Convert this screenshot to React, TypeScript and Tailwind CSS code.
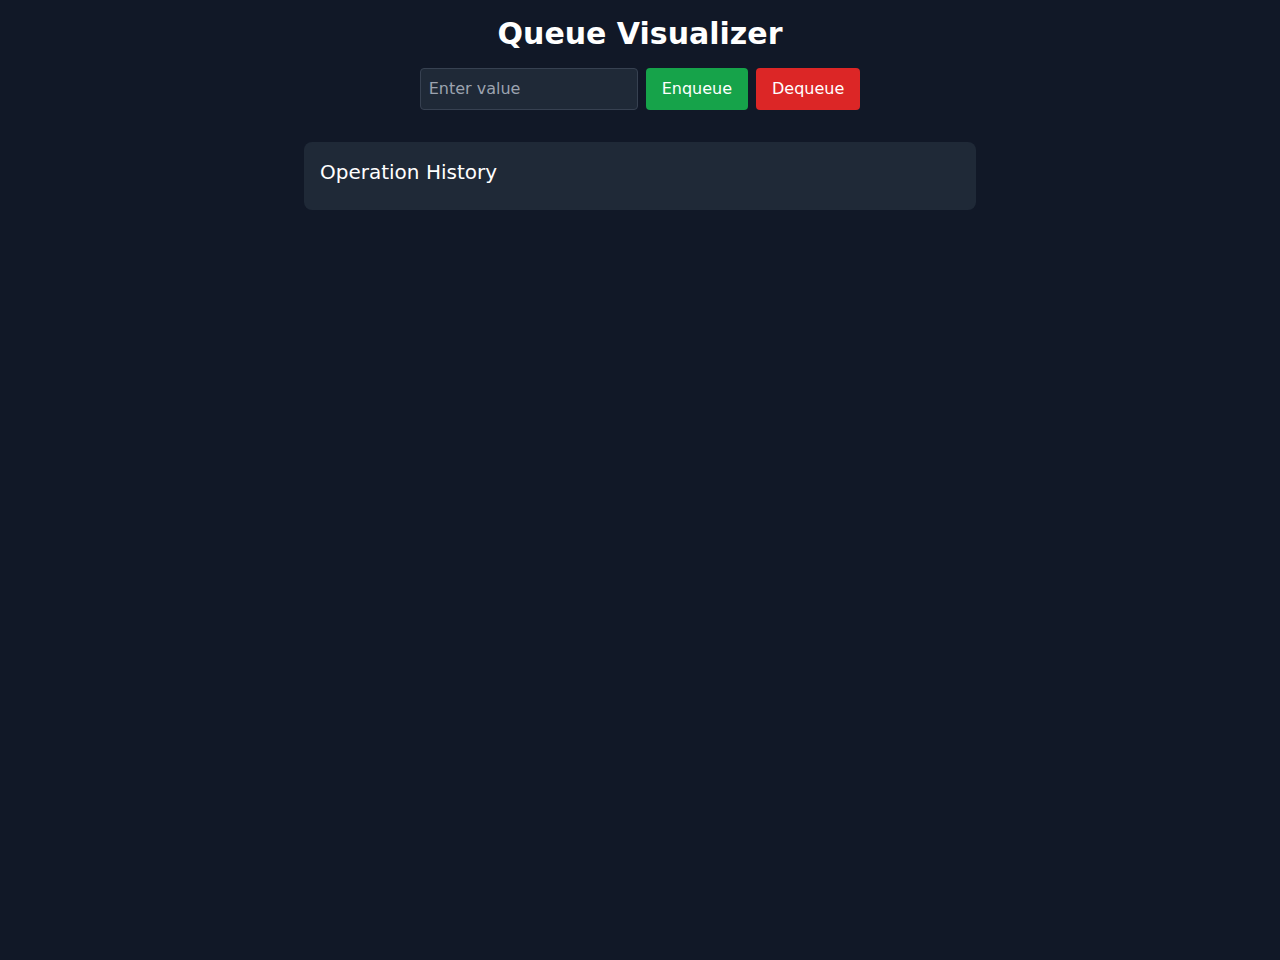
import React, { useState } from 'react';

const App: React.FC = () => {
  const [value, setValue] = useState('');
  const [queue, setQueue] = useState<string[]>([]);
  const [history, setHistory] = useState<string[]>([]);

  const enqueue = () => {
    if (!value.trim()) return;
    setQueue([...queue, value]);
    setHistory([...history, `Enqueued ${value}`]);
    setValue('');
  };

  const dequeue = () => {
    if (queue.length === 0) return;
    setHistory([...history, `Dequeued ${queue[0]}`]);
    setQueue(queue.slice(1));
  };

  return (
    <div className="min-h-screen bg-[#111827] text-white p-4 flex flex-col items-center" style={{ fontFamily: '"DejaVu Sans", sans-serif' }}>
      <h1 className="text-3xl font-bold mb-4">Queue Visualizer</h1>
      <div className="flex gap-2">
        <input
          type="text"
          value={value}
          onChange={(e) => setValue(e.target.value)}
          placeholder="Enter value"
          className="w-[218px] px-2 py-2 bg-[#1f2937] border border-[#374151] rounded text-white placeholder-[#9ca3af] outline-none"
        />
        <button className="bg-[#16a34a] text-white px-4 py-2 rounded" onClick={enqueue}>Enqueue</button>
        <button className="bg-[#dc2626] text-white px-4 py-2 rounded" onClick={dequeue}>Dequeue</button>
      </div>
      {queue.length > 0 && (
        <div className="flex gap-2 mt-8">
          {queue.map((item, i) => (
            <div key={i} className="bg-[#2563eb] px-4 py-2 rounded">{item}</div>
          ))}
        </div>
      )}
      <div className="w-full max-w-2xl mt-8 bg-[#1f2937] rounded-lg p-4">
        <h2 className="text-xl mb-2">Operation History</h2>
        <ul>
          {history.map((h, i) => (
            <li key={i} className="text-sm text-[#d1d5db]">{h}</li>
          ))}
        </ul>
      </div>
    </div>
  );
};

export default App;
